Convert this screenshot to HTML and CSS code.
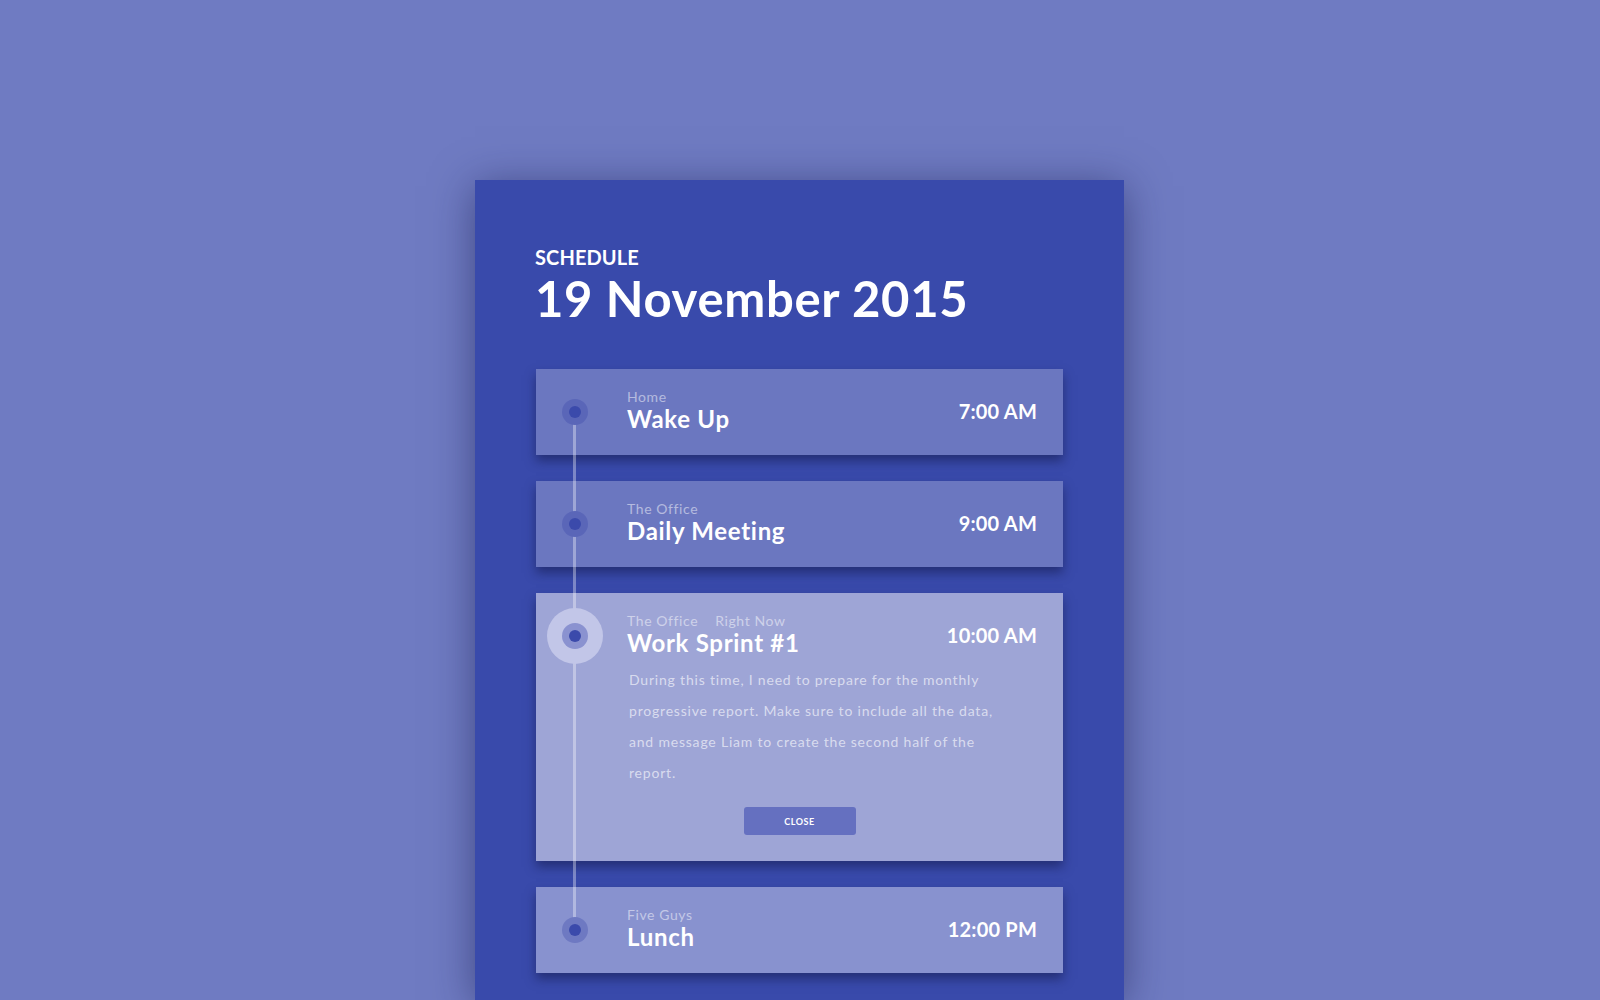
FILE: index.html
```html
<!DOCTYPE html>
<html lang="en">
<head>
<meta charset="utf-8">
<title>Schedule</title>
<link rel="stylesheet" href="styles.css">
</head>
<body>
<div class="page">
  <section class="panel">
    <div class="eyebrow">SCHEDULE</div>
    <h1 class="date">19 November 2015</h1>
    <div class="timeline">
      <div class="rail"></div>

      <article class="event">
        <div class="event-head">
          <div class="marker"><span class="ring"><span class="dot"></span></span></div>
          <div class="event-text">
            <div class="place">Home</div>
            <div class="title">Wake Up</div>
          </div>
          <div class="time">7:00 AM</div>
        </div>
      </article>

      <article class="event">
        <div class="event-head">
          <div class="marker"><span class="ring"><span class="dot"></span></span></div>
          <div class="event-text">
            <div class="place">The Office</div>
            <div class="title">Daily Meeting</div>
          </div>
          <div class="time">9:00 AM</div>
        </div>
      </article>

      <article class="event event-active">
        <div class="event-head">
          <div class="marker"><span class="halo"><span class="ring"><span class="dot"></span></span></span></div>
          <div class="event-text">
            <div class="place">The Office<span class="status">Right Now</span></div>
            <div class="title">Work Sprint #1</div>
          </div>
          <div class="time">10:00 AM</div>
        </div>
        <p class="event-body">During this time, I need to prepare for the monthly progressive report. Make sure to include all the data, and message Liam to create the second half of the report.</p>
        <div class="actions"><button class="close-btn" type="button">CLOSE</button></div>
      </article>

      <article class="event event-next">
        <div class="event-head">
          <div class="marker"><span class="ring"><span class="dot"></span></span></div>
          <div class="event-text">
            <div class="place">Five Guys</div>
            <div class="title">Lunch</div>
          </div>
          <div class="time">12:00 PM</div>
        </div>
      </article>
    </div>
  </section>
</div>
</body>
</html>
```

FILE: styles.css
```css
* { box-sizing: border-box; }

html, body {
  margin: 0;
  padding: 0;
  height: 100%;
  overflow: hidden;
}

body {
  background: #6f7bc2;
  font-family: "Lato", "Open Sans", sans-serif;
  color: #ffffff;
}

.page {
  padding-top: 180px;
  padding-left: 475px;
}

.panel {
  width: 649px;
  height: 820px;
  background: #394aab;
  padding: 65px 61px 0 60px;
  box-shadow: 0 6px 40px rgba(25, 30, 80, 0.55);
}

.eyebrow {
  font-size: 20px;
  font-weight: 700;
  line-height: 24px;
  letter-spacing: 0.1px;
}

.date {
  margin: 1px 0 0 0;
  font-size: 49px;
  font-weight: 700;
  line-height: 56px;
  letter-spacing: 0.7px;
}

.timeline {
  position: relative;
  margin-top: 43px;
  margin-left: 1px;
  display: flex;
  flex-direction: column;
  gap: 26px;
}

.rail {
  position: absolute;
  left: 37px;
  top: 43px;
  bottom: 43px;
  width: 3px;
  background: rgba(255, 255, 255, 0.35);
  z-index: 2;
}

.event {
  background: #6b77c0;
  box-shadow: 0 6px 10px rgba(20, 25, 75, 0.55);
}

.event-active { background: #9ea5d6; }
.event-next { background: #8892cf; }

.event-head {
  display: flex;
  align-items: center;
  height: 86px;
  padding-right: 26px;
}

.marker {
  position: relative;
  z-index: 3;
  width: 77px;
  flex: none;
  display: flex;
  justify-content: center;
  align-items: center;
}

.halo {
  width: 56px;
  height: 56px;
  border-radius: 50%;
  background: #c2c6e8;
  display: flex;
  justify-content: center;
  align-items: center;
}

.ring {
  width: 26px;
  height: 26px;
  border-radius: 50%;
  background: #5a66b8;
  display: flex;
  justify-content: center;
  align-items: center;
}

.event-active .ring { background: #8a92d0; }
.event-next .ring { background: #6e79c2; }

.dot {
  width: 12px;
  height: 12px;
  border-radius: 50%;
  background: #3b4aab;
}

.event-text {
  flex: 1;
  padding-left: 14px;
  padding-bottom: 3px;
}

.place {
  font-size: 14px;
  line-height: 17px;
  letter-spacing: 0.6px;
  color: rgba(255, 255, 255, 0.5);
}

.status { margin-left: 17px; }

.title {
  font-size: 24px;
  font-weight: 700;
  line-height: 28px;
  letter-spacing: 0.7px;
}

.time {
  font-size: 20px;
  font-weight: 700;
  line-height: 24px;
  letter-spacing: 0.2px;
  padding-bottom: 3px;
}

.event-body {
  margin: -15px 0 0 0;
  padding: 0 62px 0 93px;
  font-size: 14px;
  line-height: 31px;
  letter-spacing: 0.8px;
  color: rgba(255, 255, 255, 0.62);
}

.actions {
  display: flex;
  justify-content: center;
  padding: 19px 0 26px;
}

.close-btn {
  width: 112px;
  height: 28px;
  border: none;
  border-radius: 3px;
  background: #6570c0;
  color: #ffffff;
  font-family: "Lato", sans-serif;
  font-size: 9px;
  font-weight: 700;
  letter-spacing: 0.5px;
  padding: 0;
}
```
